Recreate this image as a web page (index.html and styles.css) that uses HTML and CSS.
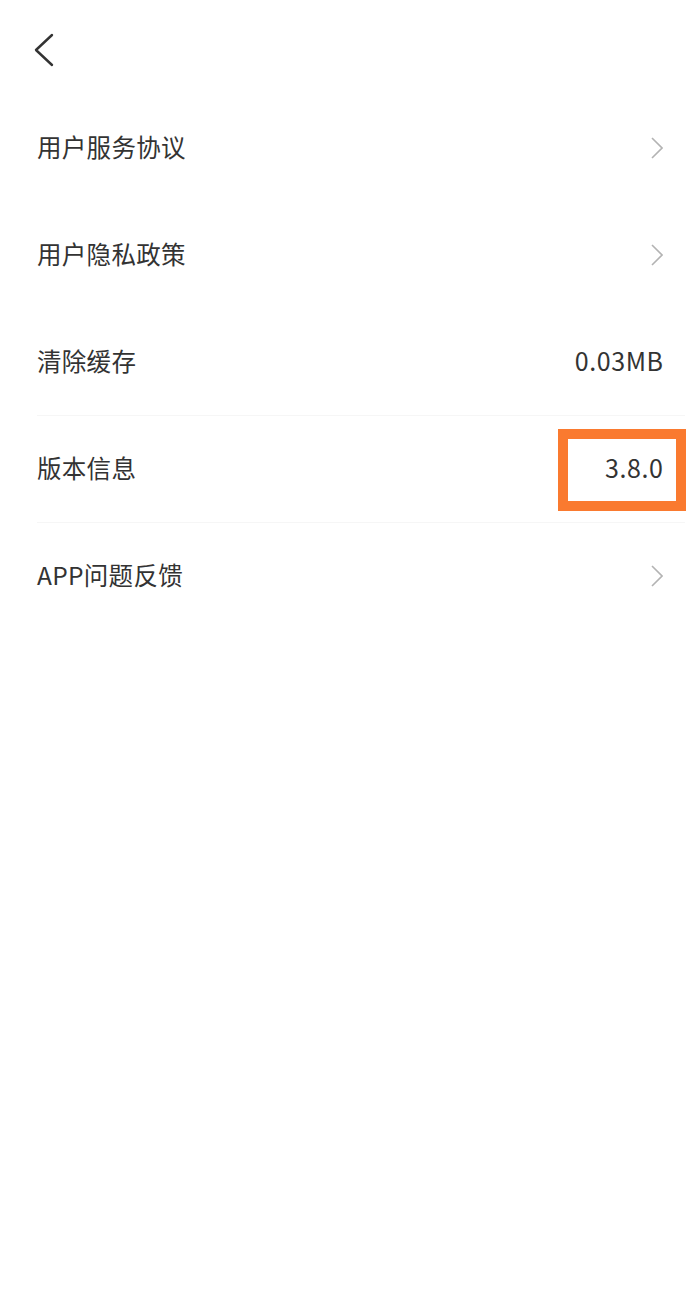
FILE: index.html
```html
<!DOCTYPE html>
<html lang="zh-CN">
<head>
  <meta charset="UTF-8">
  <meta name="viewport" content="width=device-width, initial-scale=1.0">
  <title>设置</title>
  <link rel="stylesheet" href="styles.css">
</head>
<body>
  <div class="header">
    <svg class="back" width="24" height="36" viewBox="0 0 24 36">
      <polyline points="20,4 4,19 20,34" fill="none" stroke="#333" stroke-width="2.4" stroke-linecap="round" stroke-linejoin="round"/>
    </svg>
  </div>

  <ul class="menu">
    <li class="item">
      <span class="label">用户服务协议</span>
      <svg class="arrow" width="12" height="22" viewBox="0 0 12 22">
        <polyline points="1,1 11,11 1,21" fill="none" stroke="#b3b3b3" stroke-width="1.6"/>
      </svg>
    </li>
    <li class="item">
      <span class="label">用户隐私政策</span>
      <svg class="arrow" width="12" height="22" viewBox="0 0 12 22">
        <polyline points="1,1 11,11 1,21" fill="none" stroke="#b3b3b3" stroke-width="1.6"/>
      </svg>
    </li>
    <li class="item line">
      <span class="label">清除缓存</span>
      <span class="value">0.03MB</span>
    </li>
    <li class="item line">
      <span class="label">版本信息</span>
      <span class="value">3.8.0</span>
      <!-- highlight frame -->
      <span class="mark"></span>
    </li>
    <li class="item">
      <span class="label">APP问题反馈</span>
      <svg class="arrow" width="12" height="22" viewBox="0 0 12 22">
        <polyline points="1,1 11,11 1,21" fill="none" stroke="#b3b3b3" stroke-width="1.6"/>
      </svg>
    </li>
  </ul>
</body>
</html>
```

FILE: styles.css
```css
* {
  margin: 0;
  padding: 0;
  box-sizing: border-box;
}

body {
  font-family: "Noto Sans CJK SC", "Noto Sans", sans-serif;
  background-color: #fff;
  color: #333;
}

.header {
  height: 95px;
  display: flex;
  align-items: center;
  padding-left: 32px;
}

.back {
  display: block;
  margin-top: 3px;
}

.menu {
  list-style: none;
}

.item {
  position: relative;
  height: 107px;
  display: flex;
  align-items: center;
  justify-content: space-between;
  margin: 0 15px 0 37px;
  padding: 0 22px 4px 0;
}

.item.line {
  border-bottom: 1px solid #f6f6f6;
}

.label {
  font-size: 24.5px;
  letter-spacing: 0.3px;
}

.value {
  font-size: 25px;
  letter-spacing: 0.6px;
  margin-right: -0.6px;
  color: #333;
}

.arrow {
  display: block;
  margin-top: 2px;
}

.mark {
  position: absolute;
  right: -1px;
  top: 13px;
  width: 128px;
  height: 82px;
  border: 10px solid #fa7a2f;
}
```
